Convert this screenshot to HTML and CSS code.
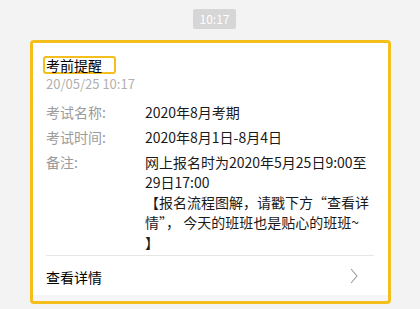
FILE: index.html
```html
<!DOCTYPE html>
<html lang="zh-CN">

<head>
  <meta charset="UTF-8">
  <meta name="viewport" content="width=device-width, initial-scale=1.0">
  <title>考前提醒</title>
  <link rel="stylesheet" href="styles.css">
</head>

<body>
  <div class="chat">
    <div class="chat-time"><span>10:17</span></div>

    <div class="card-frame">
      <div class="card">
        <div class="card-head">
          <span class="card-title">考前提醒</span>
          <div class="card-date">20/05/25 10:17</div>
        </div>

        <div class="card-rows">
          <div class="card-row">
            <div class="row-label">考试名称:</div>
            <div class="row-value">2020年8月考期</div>
          </div>
          <div class="card-row">
            <div class="row-label">考试时间:</div>
            <div class="row-value">2020年8月1日-8月4日</div>
          </div>
          <div class="card-row">
            <div class="row-label">备注:</div>
            <div class="row-value note">网上报名时为2020年5月25日9:00至<br>29日17:00<br>【报名流程图解，请戳下方“查看详<br>情”， 今天的班班也是贴心的班班~<br>】</div>
          </div>
        </div>

        <a class="card-link" href="#">
          <span>查看详情</span>
          <svg class="chevron" width="8" height="16" viewBox="0 0 8 16">
            <path d="M1 1 L7 8 L1 15" fill="none" stroke="#9a9a9a" stroke-width="1.1" />
          </svg>
        </a>
      </div>
    </div>
  </div>
</body>

</html>
```

FILE: styles.css
```css
:root {
  --bg: #f3f3f3;
  --frame: #f4bf1c;
  --text-dark: #1a1a1a;
  --text-light: #9b9b9b;
  --line: #e6e6e6;
}

* {
  margin: 0;
  padding: 0;
  box-sizing: border-box;
}

body {
  font-family: "Noto Sans CJK SC", "Noto Sans", sans-serif;
  background: var(--bg);
  color: var(--text-dark);
}

.chat {
  padding: 9px 29px 0 30px;
}

.chat-time {
  display: flex;
  justify-content: center;
  padding-left: 8px;
}

.chat-time span {
  background: #d6d6d6;
  color: #fff;
  font-size: 12px;
  line-height: 20px;
  height: 20px;
  padding: 0 7px;
  border-radius: 2px;
}

.card-frame {
  margin-top: 11px;
  border: 3px solid var(--frame);
  border-radius: 4px;
  background: #f6f6f8;
  padding-bottom: 6px;
}

.card {
  background: #fff;
  padding: 13px 14px 4px 13px;
}

.card-head {
  display: flex;
  flex-direction: column;
  align-items: flex-start;
}

.card-title {
  display: block;
  margin-left: -3px;
  padding: 0 12px 0 1px;
  border: 2px solid var(--frame);
  border-radius: 3px;
  font-size: 14px;
  line-height: 14px;
  height: 18px;
  color: #000;
}

.card-date {
  margin-top: 1px;
  font-size: 13px;
  line-height: 18px;
  color: #b0b0b0;
}

.card-rows {
  padding: 9px 0 3px;
  border-bottom: 1px solid var(--line);
}

.card-row {
  display: flex;
  font-size: 14px;
  line-height: 20px;
  margin-bottom: 5px;
}

.card-row:last-child {
  margin-bottom: 0;
}

.row-label {
  width: 99px;
  flex-shrink: 0;
  color: var(--text-light);
}

.row-value {
  color: var(--text-dark);
}

.card-link {
  display: flex;
  align-items: flex-start;
  justify-content: space-between;
  padding: 11px 16px 4px 0;
  font-size: 14px;
  line-height: 20px;
  color: #000;
  text-decoration: none;
}

.chevron {
  display: block;
  margin-top: 1px;
}
```
